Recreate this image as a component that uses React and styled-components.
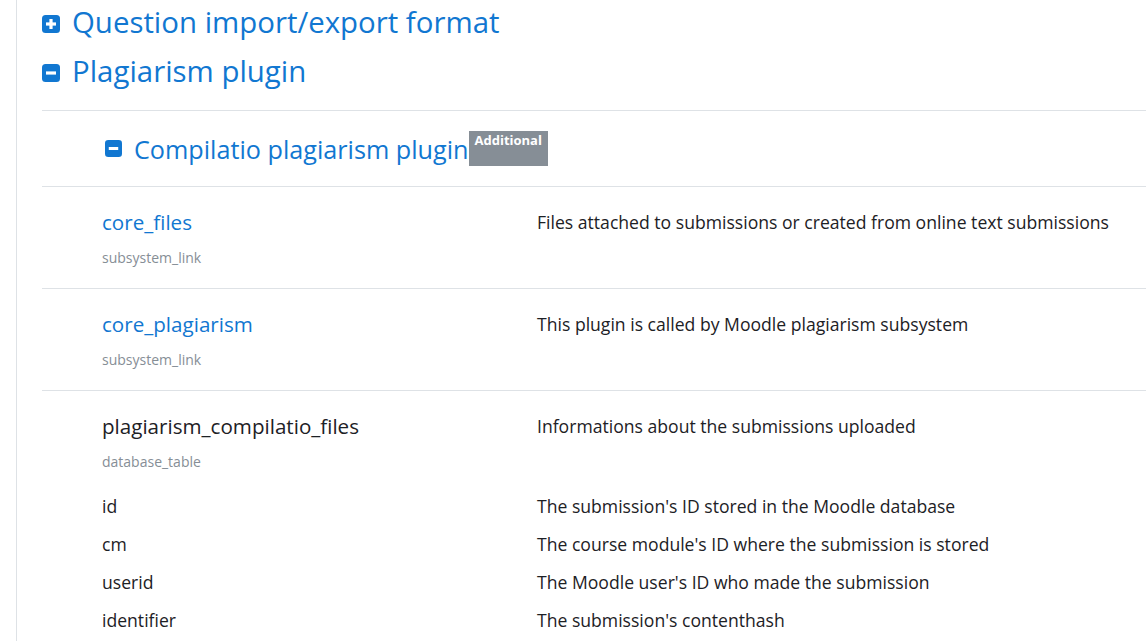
import React from "react";
import styled, { createGlobalStyle } from "styled-components";

const Global = createGlobalStyle`
  html, body { margin: 0; padding: 0; background: #fff; }
  body { font-family: "Open Sans", "Noto Sans", sans-serif; color: #1d2125; overflow: hidden; }
`;

const Page = styled.div`
  height: 641px;
  padding-left: 16px;
  overflow: hidden;
`;

const Region = styled.div`
  border-left: 1px solid #dee2e6;
  padding-left: 25px;
  height: 100%;
`;

const Section = styled.div``;

const Heading = styled.div`
  display: flex;
  align-items: center;
  height: ${(p) => p.$h}px;
  padding-left: ${(p) => p.$indent || 0}px;
  color: #1177d1;
  font-size: ${(p) => p.$size}px;
  font-weight: 400;
  white-space: nowrap;
`;

const HeadingText = styled.span`
  position: relative;
  top: ${(p) => p.$shift || 0}px;
`;

const IconBox = styled.span`
  display: inline-flex;
  width: ${(p) => p.$s}px;
  height: ${(p) => p.$s}px;
  margin-right: 12px;
  flex: none;
`;

const Badge = styled.span`
  align-self: flex-start;
  margin-top: ${(p) => p.$top}px;
  background: #868e96;
  color: #fff;
  font-size: 13px;
  font-weight: 700;
  padding: 3px 6px 19px;
  line-height: 1;
`;

const Spacer = styled.div`
  height: ${(p) => p.$h}px;
`;

const Divider = styled.div`
  border-top: 1px solid #dee2e6;
`;

const Row = styled.div`
  display: grid;
  grid-template-columns: 435px 1fr;
  padding: ${(p) => p.$pad || "0"};
  padding-left: 60px;
  border-bottom: ${(p) => (p.$border ? "1px solid #dee2e6" : "none")};
`;

const NameCell = styled.div`
  display: flex;
  flex-direction: column;
`;

const Name = styled.span`
  font-size: 20.6px;
  line-height: 28px;
  white-space: nowrap;
  color: ${(p) => (p.$link ? "#1177d1" : "#1d2125")};
`;

const Type = styled.span`
  font-size: 14px;
  line-height: 20px;
  margin-top: 12px;
  color: #868e96;
`;

const Desc = styled.span`
  font-size: 17.6px;
  line-height: 28px;
  white-space: nowrap;
`;

const FieldRow = styled.div`
  display: grid;
  grid-template-columns: 435px 1fr;
  padding-left: 60px;
  height: 38px;
  align-items: center;
  font-size: 17.6px;
  white-space: nowrap;
`;

const Square = ({ plus, size }) => (
  <IconBox $s={size}>
    <svg viewBox="0 0 18 18" width={size} height={size}>
      <rect x="0" y="0" width="18" height="18" rx="3.5" fill="#1177d1" />
      <rect x="4" y="7.4" width="10" height="3.2" fill="#fff" />
      {plus && <rect x="7.4" y="4" width="3.2" height="10" fill="#fff" />}
    </svg>
  </IconBox>
);

const entries = [
  { name: "core_files", type: "subsystem_link", link: true, desc: "Files attached to submissions or created from online text submissions" },
  { name: "core_plagiarism", type: "subsystem_link", link: true, desc: "This plugin is called by Moodle plagiarism subsystem" },
];

const fields = [
  ["id", "The submission's ID stored in the Moodle database"],
  ["cm", "The course module's ID where the submission is stored"],
  ["userid", "The Moodle user's ID who made the submission"],
  ["identifier", "The submission's contenthash"],
];

export default function App() {
  return (
    <>
      <Global />
      <Page>
        <Region>
          <Section>
            <Heading $h={48} $size={29.4}>
              <Square plus size={18} />
              <HeadingText $shift={-2}>Question import/export format</HeadingText>
            </Heading>
            <Heading $h={50} $size={29.4}>
              <Square size={18} />
              <HeadingText $shift={-2}>Plagiarism plugin</HeadingText>
            </Heading>
            <Spacer $h={12} />
            <Divider />
            <Heading $h={75} $size={25.2} $indent={63}>
              <Square size={17} />
              <HeadingText>Compilatio plagiarism plugin</HeadingText>
              <Badge $top={20}>Additional</Badge>
            </Heading>
            <Divider />
            {entries.map((e) => (
              <Row key={e.name} $pad="21px 0 20px" $border>
                <NameCell>
                  <Name $link={e.link}>{e.name}</Name>
                  <Type>{e.type}</Type>
                </NameCell>
                <Desc>{e.desc}</Desc>
              </Row>
            ))}
            <Row $pad="21px 0 15px">
              <NameCell>
                <Name>plagiarism_compilatio_files</Name>
                <Type>database_table</Type>
              </NameCell>
              <Desc>Informations about the submissions uploaded</Desc>
            </Row>
            {fields.map(([n, d]) => (
              <FieldRow key={n}>
                <span>{n}</span>
                <span>{d}</span>
              </FieldRow>
            ))}
          </Section>
        </Region>
      </Page>
    </>
  );
}
